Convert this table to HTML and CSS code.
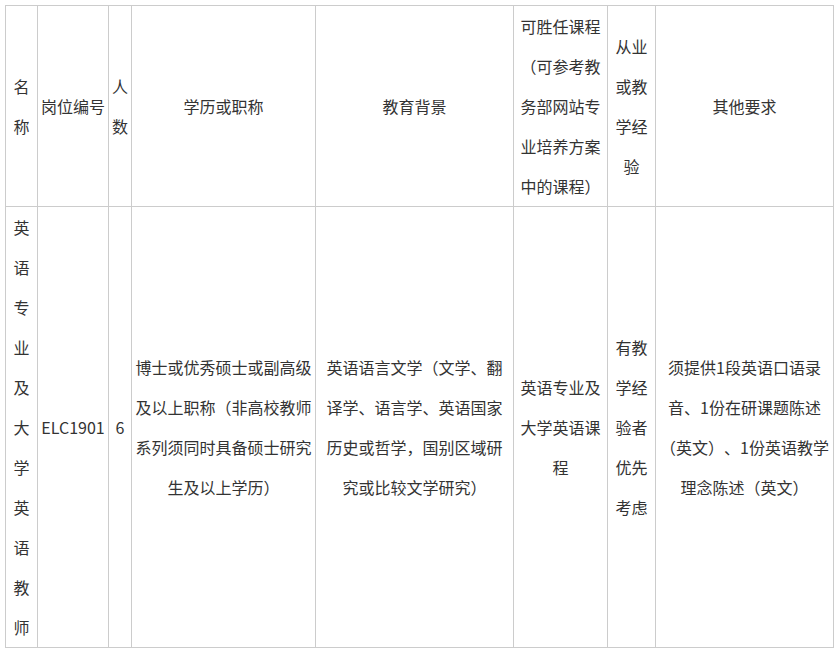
FILE: index.html
```html
<!DOCTYPE html>
<html lang="zh-CN">
<head>
<meta charset="utf-8">
<title>岗位表</title>
<link rel="stylesheet" href="styles.css">
</head>
<body>
<div class="wrap">
<table class="jobs">
<colgroup>
<col class="c-name">
<col class="c-code">
<col class="c-num">
<col class="c-degree">
<col class="c-edu">
<col class="c-course">
<col class="c-exp">
<col class="c-other">
</colgroup>
<tbody>
<tr class="head">
<td>名称</td>
<td>岗位编号</td>
<td>人数</td>
<td>学历或职称</td>
<td>教育背景</td>
<td>可胜任课程（可参考教务部网站专业培养方案中的课程）</td>
<td>从业或教学经验</td>
<td>其他要求</td>
</tr>
<tr class="body">
<td>英语专业及大学英语教师</td>
<td>ELC1901</td>
<td>6</td>
<td>博士或优秀硕士或副高级及以上职称（非高校教师系列须同时具备硕士研究生及以上学历）</td>
<td>英语语言文学（文学、翻译学、语言学、英语国家历史或哲学，国别区域研究或比较文学研究）</td>
<td>英语专业及大学英语课程</td>
<td>有教学经验者优先考虑</td>
<td>须提供1段英语口语录音、1份在研课题陈述（英文）、1份英语教学理念陈述（英文）</td>
</tr>
</tbody>
</table>
</div>
</body>
</html>
```
FILE: styles.css
```css
html, body {
  margin: 0;
  padding: 0;
  background: #ffffff;
}
.wrap {
  padding: 5px;
}
.jobs {
  border-collapse: collapse;
  table-layout: fixed;
  width: 829px;
  font-family: "Noto Sans CJK SC", "Noto Sans", sans-serif;
  font-size: 16px;
  line-height: 40px;
  color: #333333;
  text-spacing-trim: space-all;
}
.jobs td {
  border: 1px solid #cccccc;
  padding: 0 3px;
  text-align: center;
  vertical-align: middle;
  word-break: break-all;
}
.c-name { width: 32px; }
.c-code { width: 71px; }
.c-num { width: 23px; }
.c-degree { width: 184px; }
.c-edu { width: 198px; }
.c-course { width: 94px; }
.c-exp { width: 48px; }
.c-other { width: 178px; }
```
